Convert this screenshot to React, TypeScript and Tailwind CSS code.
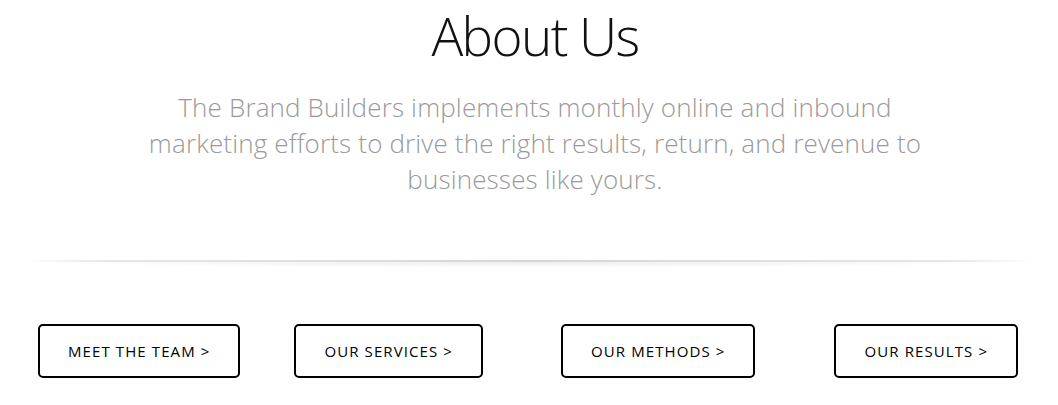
const buttons = [
  { label: 'MEET THE TEAM >', className: 'ml-[38px]' },
  { label: 'OUR SERVICES >', className: 'ml-[54px]' },
  { label: 'OUR METHODS >', className: 'ml-[78px]' },
  { label: 'OUR RESULTS >', className: 'ml-[79px]' }
]

const App = () => {
  return (
    <div className="w-[1058px] h-[405px] bg-white overflow-hidden font-['Open_Sans',sans-serif]">
      {/* Intro */}
      <div className="flex flex-col items-center pl-[12px]">
        <h1 className="mt-[4px] text-[53px] leading-[64px] font-light text-[#111] tracking-[-1.6px]">
          About Us
        </h1>
        <p className="mt-[21px] w-[790px] text-center text-[26px] leading-[36px] font-light text-[#9a9a9a] tracking-[0.15px]">
          The Brand Builders implements monthly online and inbound marketing efforts to drive the right
          results, return, and revenue to businesses like yours.
        </p>
      </div>

      {/* Divider */}
      <div className="mt-[63px] mx-[25px]">
        <div className="h-[2px] bg-[linear-gradient(to_right,rgba(0,0,0,0),#e6e6e6_8%,#d6d6d6_50%,#e6e6e6_92%,rgba(0,0,0,0))]" />
        <div className="h-[6px] bg-[radial-gradient(ellipse_at_top,rgba(0,0,0,0.07),rgba(0,0,0,0)_70%)]" />
      </div>

      {/* Links */}
      <div className="mt-[56px] flex">
        {buttons.map((btn) => (
          <a
            key={btn.label}
            href="#"
            className={`${btn.className} h-[54px] px-[28px] flex items-center border-2 border-black rounded-[5px] text-[15px] font-medium tracking-[1.1px] text-black whitespace-nowrap`}
          >
            {btn.label}
          </a>
        ))}
      </div>
    </div>
  )
}

export default App
